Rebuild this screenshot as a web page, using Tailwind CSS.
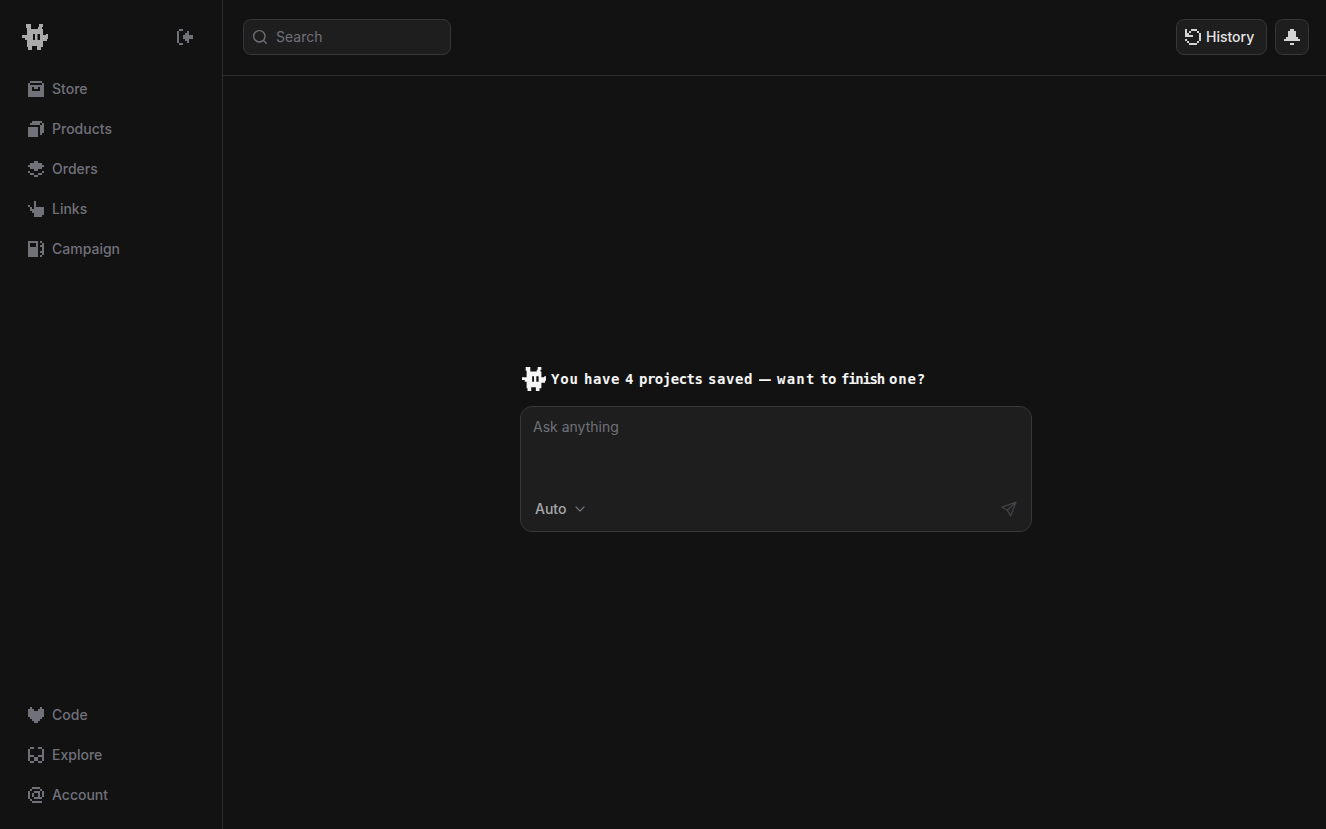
<!DOCTYPE html>
<html lang="en">
<head>
<meta charset="utf-8">
<title>Dashboard</title>
<script src="https://cdn.jsdelivr.net/npm/@tailwindcss/browser@4"></script>
</head>
<body class="flex h-screen overflow-hidden bg-[#121212] text-sm font-medium text-[#71717a] [font-family:Inter,sans-serif]">
<svg class="hidden">
  <symbol id="bot" viewBox="0 0 26 26"><path fill-rule="evenodd" d="M4 0h5v5h7V3h1V0h4v3h-1v2h1v6h3v-1h2v5h-1v2h-4v6h-2v3h-4v-4h-5v4H6v-3H5v-7H3v-2H0v-3h5V4H4zM11 10v6h2v-6zM15.500 10v6h2.500v-6z"/></symbol>
</svg>
<aside class="flex w-[223px] shrink-0 flex-col border-r border-[#2e2e31] pt-[22px] pb-[14px]">
  <div class="flex items-center justify-between pr-[29px] pl-[22px]">
    <svg class="mt-[2px] size-[26px] fill-[#aaaaab]"><use href="#bot"/></svg>
    <svg class="mt-[2px] size-4" viewBox="0 0 16 16" shape-rendering="crispEdges" fill="currentColor"><path d="M2 0h4v2H2zM0 2h2v12H0zM2 14h4v2H2zM6 6h2V4h2V2h2v4h4v4h-4v4h-2v-2H8v-2H6z"/></svg>
  </div>
  <nav id="top" class="mt-[19px] flex flex-col"></nav>
  <nav id="bottom" class="mt-auto flex flex-col"></nav>
</aside>
<main class="flex min-w-0 flex-1 flex-col">
  <header class="flex h-[76px] shrink-0 items-center justify-between border-b border-[#2e2e31] pr-[17px] pb-px pl-5">
    <label class="flex h-9 w-52 items-center gap-2 rounded-lg border border-[#37373a] bg-[#1e1e1e] px-2 font-normal">
      <svg class="size-4" viewBox="0 0 24 24" fill="none" stroke="currentColor" stroke-width="2" stroke-linecap="round"><circle cx="11" cy="11" r="8.500"/><path d="m21.500 21.500-4.300-4.300"/></svg>
      <span>Search</span>
    </label>
    <div class="flex gap-2">
      <button class="flex h-9 w-[91px] items-center gap-[5px] rounded-lg border border-[#37373a] bg-[#1e1e1e] pl-2 text-[#e5e5e5]">
        <svg class="size-4" viewBox="0 0 16 16" shape-rendering="crispEdges" fill="#d4d4d4"><path d="M0 0h2v4h2V2h2v2H4v2h4v2H0zM6 0h6v2H6zM12 2h2v2h-2zM14 4h2v8h-2zM12 12h2v2h-2zM4 14h8v2H4zM2 12h2v2H2zM0 10h2v2H0z"/></svg>
        <span>History</span>
      </button>
      <button class="flex h-9 w-[34px] items-center justify-center rounded-lg border border-[#37373a] bg-[#1e1e1e]">
        <svg class="size-4" viewBox="0 0 16 16" shape-rendering="crispEdges" fill="#d4d4d4"><path d="M6 0h4v2h2v6h2v2h2v2H0v-2h2V8h2V2h2zM6 14h4v2H6z"/></svg>
      </button>
    </div>
  </header>
  <section class="flex flex-1 flex-col items-center pt-[290px] pl-[3px]">
    <div class="w-[512px]">
      <div class="flex h-[26px] items-center pl-[2px]">
        <svg class="size-6 fill-[#f5f5f5]"><use href="#bot"/></svg>
        <h1 class="ml-[5px] flex text-[14px] leading-none font-bold whitespace-nowrap text-[#f5f5f5] [font-family:'DejaVu_Sans_Mono',monospace]">
          <span class="w-[33px] tracking-[0.8px]">You</span>
          <span class="w-[41px] tracking-[0.6px]">have</span>
          <span class="w-[14px]">4</span>
          <span class="w-[69px] tracking-[-0.5px]">projects</span>
          <span class="w-[51px] tracking-[0.6px]">saved</span>
          <span class="w-[18px] origin-left scale-x-140">—</span>
          <span class="w-[43px] tracking-[1.2px]">want</span>
          <span class="w-[21px] tracking-[-0.5px]">to</span>
          <span class="w-[48px] tracking-[-1.3px]">finish</span>
          <span class="w-[37px] tracking-[0.8px]">one?</span>
        </h1>
      </div>
      <div class="mt-[14px] flex h-[126px] flex-col justify-between rounded-xl border border-[#37373a] bg-[#1e1e1e] px-3 pt-[10px] pb-3">
        <span class="font-normal">Ask anything</span>
        <div class="flex items-center justify-between pr-[2px] pl-[2px]">
          <button class="flex items-center gap-2 text-[#a8a8ac]"><span>Auto</span>
            <svg class="size-3" viewBox="0 0 12 12" fill="none" stroke="#71717a" stroke-width="1.2" stroke-linecap="round" stroke-linejoin="round"><path d="m2 4 4 4 4-4"/></svg>
          </button>
          <svg class="size-4" viewBox="0 0 16 16" fill="none" stroke="#424247" stroke-width="1.3" stroke-linejoin="round" stroke-linecap="round"><path d="M15 1.200 1 6.200l5.300 3 3.400 5.600zM15 1.200 6.300 9.200"/></svg>
        </div>
      </div>
    </div>
  </section>
</main>
<script>
const icons = {
  Store: [".######.","#......#","########","##.##.##","##....##","########","########","########"],
  Products: ["..#####.",".#####.#","......##","#####.##","#####.##","#####.##","#####.#.","#####..."],
  Orders: ["...##...",".######.","########",".######.","...##...","#......#",".##..##.","...##..."],
  Links: ["...#....","...#....","#..#....",".#.#####",".#######","..######","...#####","...####."],
  Campaign: ["#####.#.","#...#..#","#...#.##","#####..#","#####..#","#####.##","#####..#","#####.#."],
  Code: [".#....#.","###..###","########","########","########",".######.","..####..","...##..."],
  Explore: [".##..##.","#......#","#......#","#......#","###..###","#..##..#","#..##..#",".##..##."],
  Account: ["..####..",".#....#.","#..###.#","#.#..#.#","#.#..#.#","#..####.",".#......","..#####."]
};
function fill(id, names) {
  document.getElementById(id).innerHTML = names.map(n => {
    const d = icons[n].map((r, y) => [...r].map((c, x) => c === "#" ? `M${x} ${y}h1v1h-1z` : "").join("")).join("");
    return `<a class="flex h-10 items-center gap-2 pl-7"><svg class="size-4" viewBox="0 0 8 8" fill="currentColor" shape-rendering="crispEdges"><path d="${d}"/></svg><span>${n}</span></a>`;
  }).join("");
}
fill("top", ["Store", "Products", "Orders", "Links", "Campaign"]);
fill("bottom", ["Code", "Explore", "Account"]);
</script>
</body>
</html>
